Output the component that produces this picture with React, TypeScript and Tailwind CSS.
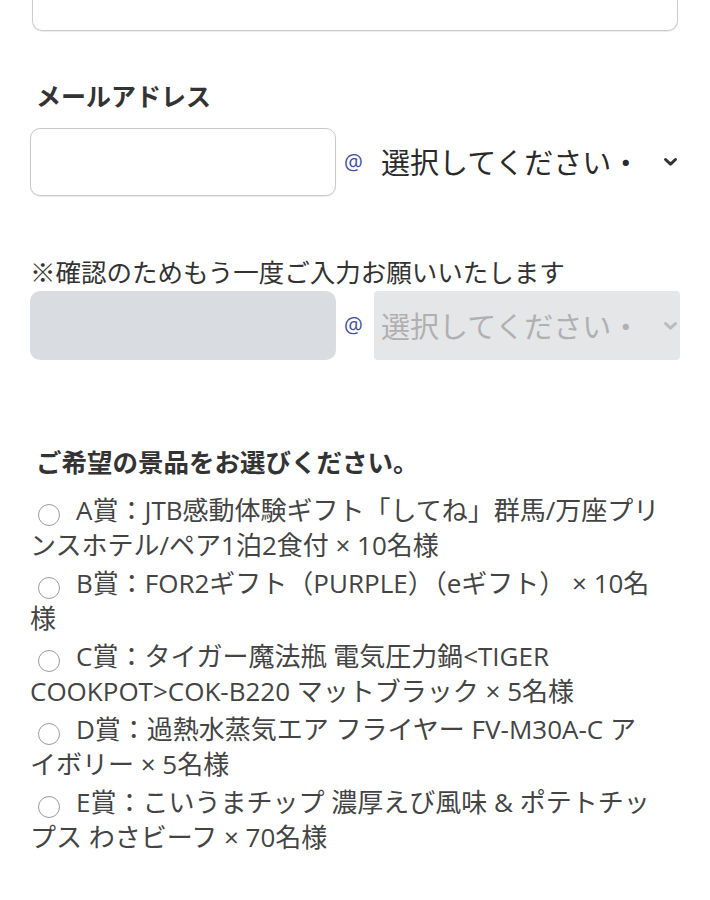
import React from "react";

const Chevron = ({ color }: { color: string }) => (
  <svg width="15" height="10" viewBox="0 0 15 10" className="shrink-0">
    <path d="M2.5 2.5 L7.5 7.2 L12.5 2.5" fill="none" stroke={color} strokeWidth="3" strokeLinecap="round" strokeLinejoin="round" />
  </svg>
);

const Radio = () => (
  <span className="inline-block align-[-6px] w-[22px] h-[22px] rounded-full border-[1.5px] border-[#9c9c9c] bg-white ml-[8px] mr-[16px]" />
);

const items: [string, string][] = [
  ["A賞：JTB感動体験ギフト「してね」群馬/万座プリ", "ンスホテル/ペア1泊2食付 × 10名様"],
  ["B賞：FOR2ギフト（PURPLE）（eギフト） × 10名", "様"],
  ["C賞：タイガー魔法瓶 電気圧力鍋<TIGER", "COOKPOT>COK-B220 マットブラック × 5名様"],
  ["D賞：過熱水蒸気エア フライヤー FV-M30A-C ア", "イボリー × 5名様"],
  ["E賞：こいうまチップ 濃厚えび風味 & ポテトチッ", "プス わさビーフ × 70名様"],
];

const At = () => (
  <span
    className="ml-[8px] w-[30px] text-[21px] leading-none font-medium text-[#434f99]"
    style={{ fontFamily: '"Open Sans", "Noto Sans", sans-serif' }}
  >
    @
  </span>
);

export default function App() {
  return (
    <div
      className="bg-white min-h-[900px] pl-[30px] pr-[30px] text-[#333]"
      style={{ fontFamily: '"Noto Sans CJK JP", "Noto Sans", sans-serif' }}
    >
      <div className="mx-[2px] h-[31px] border-[1.5px] border-t-0 border-[#cbcbcb] rounded-b-[10px] shadow-[0_1px_1px_rgba(0,0,0,0.08)]" />

      <div className="mt-[46px] text-[25px] leading-[36px] font-bold text-[#333] pl-[6px]">メールアドレス</div>

      <div className="mt-[15px] flex items-center">
        <div className="w-[306px] h-[68px] shrink-0 border-[1.5px] border-[#c9c9c9] rounded-[10px] bg-white shadow-[0_1px_1px_rgba(0,0,0,0.08)]" />
        <At />
        <div className="flex-1 h-[68px] flex items-center pl-[7px] pr-[2px]">
          <span className="flex-1 overflow-hidden whitespace-nowrap text-[29px] text-[#2a2a2a]">選択してください・</span>
          <Chevron color="#333" />
        </div>
      </div>

      <div className="mt-[57px] text-[25.5px] leading-[36px] text-[#333]">※確認のためもう一度ご入力お願いいたします</div>

      <div className="mt-[2px] flex items-center">
        <div className="w-[306px] h-[69px] shrink-0 rounded-[10px] bg-[#d9dce1]" />
        <At />
        <div className="flex-1 h-[69px] flex items-center pl-[7px] pr-[2px] rounded-[4px] bg-[#e5e6e8]">
          <span className="flex-1 overflow-hidden whitespace-nowrap text-[29px] text-[#b0b0b0]">選択してください・</span>
          <Chevron color="#bbbbbb" />
        </div>
      </div>

      <div className="mt-[83px] text-[25.5px] leading-[36px] font-bold text-[#333] pl-[6px]">ご希望の景品をお選びください。</div>

      <div
        className="mt-[14px] flex flex-col gap-[3px]"
        style={{ fontFamily: '"Open Sans", "Noto Sans CJK JP", sans-serif' }}
      >
        {items.map(([a, b]) => (
          <label key={a} className="block whitespace-nowrap text-[26px] leading-[35px] text-[#444]">
            <Radio />
            {a}
            <br />
            {b}
          </label>
        ))}
      </div>
    </div>
  );
}
